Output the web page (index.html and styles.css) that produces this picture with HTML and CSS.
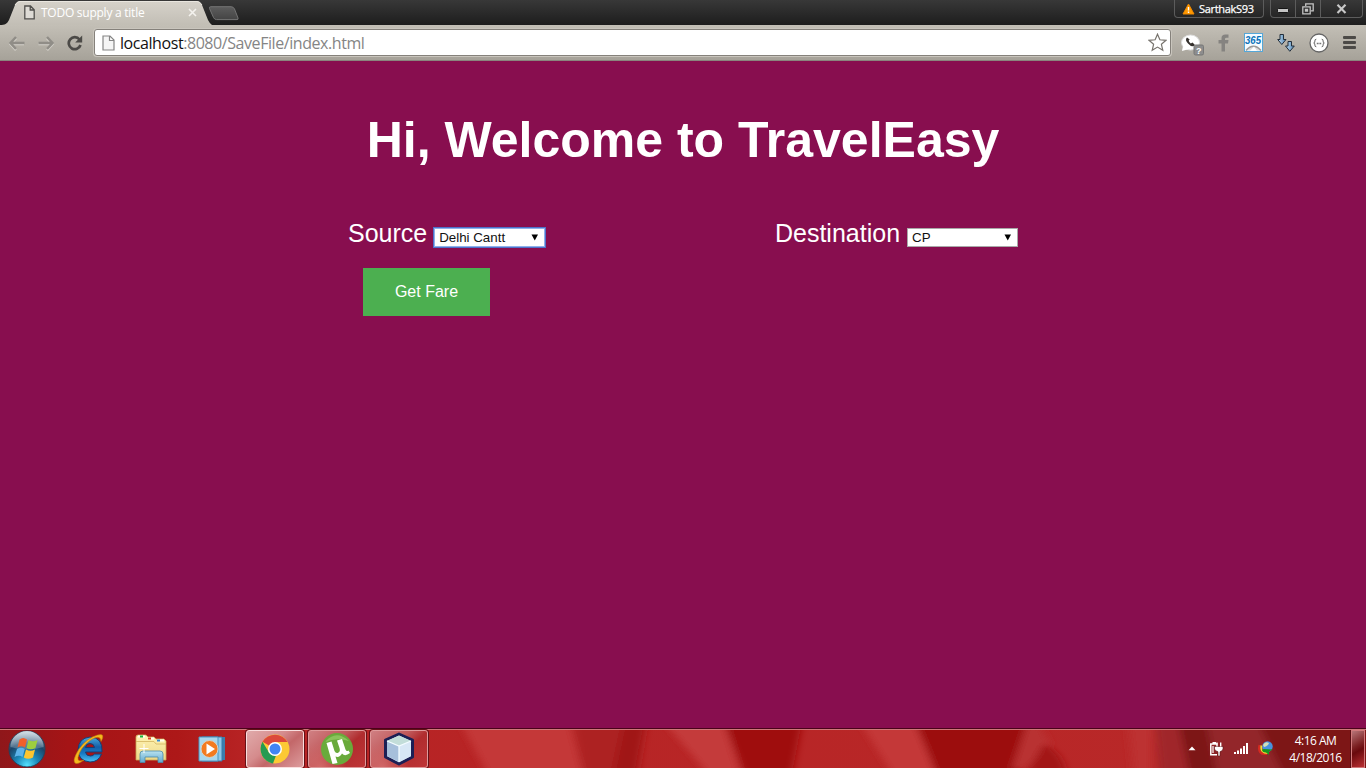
FILE: index.html
```html
<!DOCTYPE html>
<html lang="en">
<head>
<meta charset="utf-8">
<title>TODO supply a title</title>
<link rel="stylesheet" href="styles.css">
</head>
<body>
<div class="screen">
  <header class="tabstrip">
    <div class="tab">
      <svg class="tab-shape" width="212" height="25" viewBox="0 0 212 25">
        <defs><linearGradient id="tabfill" x1="0" y1="0" x2="0" y2="1"><stop offset="0" stop-color="#d6d2ca"/><stop offset="1" stop-color="#c2beb5"/></linearGradient></defs>
        <path d="M0 25C5 25 7 24 9 20L15 5Q17 1 20 1H197Q200 1 202 5L208 20Q210 24 212 25Z" fill="url(#tabfill)"/>
        <path d="M15 5Q17 1.500 20 1.500H197Q200 1.500 202 5" fill="none" stroke="#e9e6df"/>
      </svg>
      <svg class="tab-page" width="11" height="15" viewBox="0 0 11 15"><path d="M.8 1H6.500L10.200 4.700V13.800H.8ZM6.200 1V5H10" fill="#dedbd5" stroke="#504f4c" stroke-width="1.300"/></svg>
      <span class="tab-title">TODO supply a title</span>
      <svg class="tab-close" width="9" height="9" viewBox="0 0 9 9"><path d="M1 1L8 8M8 1L1 8" stroke="#f4f2ee" stroke-width="1.600"/></svg>
    </div>
    <svg class="newtab" width="32" height="15" viewBox="0 0 32 15"><defs><linearGradient id="nt" x2="0" y2="1"><stop stop-color="#5d5d5d"/><stop offset="1" stop-color="#444"/></linearGradient></defs><path d="M2.500.7H23Q25.500.7 26.500 3L30 12Q30.500 13.600 29 13.600H8.500Q6.500 13.600 5.500 11.500L1.500 2.500Q1 .7 2.500.7Z" fill="url(#nt)" stroke="#747474"/></svg>
    <div class="profile">
      <svg width="13" height="12" viewBox="0 0 13 12"><path d="M6.500 1L12 11H1Z" fill="#f90" stroke="#f08a00" stroke-linejoin="round"/><path d="M6.500 4V7.500M6.500 8.500V10" stroke="#fff" stroke-width="1.400"/></svg>
      <span>SarthakS93</span>
    </div>
    <div class="winbtns">
      <div class="wb wb-min"><svg width="12" height="5" viewBox="0 0 12 5"><rect x=".5" y=".5" width="11" height="4" rx="1" fill="#c4c4c4" stroke="#151515"/></svg></div>
      <div class="wb wb-max"><svg width="12" height="12" viewBox="0 0 12 12"><path d="M3.700 3V.8H11.200V7.800H9M.8 3.800H8.200V10.800H.8ZM3.500 6.500H5.500V8H3.500Z" fill="none" stroke="#c4c4c4" stroke-width="1.300"/></svg></div>
      <div class="wb wb-close"><svg width="11" height="10" viewBox="0 0 11 10"><path d="M1.500.7L9.500 9M9.500.7L1.500 9" stroke="#c8c8c8" stroke-width="2.100"/></svg></div>
    </div>
  </header>

  <nav class="toolbar">
    <svg class="nav-icon" width="18" height="16" viewBox="0 0 18 16"><path d="M8 2L2.500 8L8 14M3 8H16" fill="none" stroke="#d5d2cb" stroke-width="2.600" transform="translate(0 1)"/><path d="M8 2L2.500 8L8 14M3 8H16.500" fill="none" stroke="#908d87" stroke-width="2.500"/></svg>
    <svg class="nav-icon" width="18" height="16" viewBox="0 0 18 16"><path d="M10 2L15.500 8L10 14M15 8H1.500" fill="none" stroke="#d5d2cb" stroke-width="2.600" transform="translate(0 1)"/><path d="M10 2L15.500 8L10 14M15 8H1.500" fill="none" stroke="#908d87" stroke-width="2.500"/></svg>
    <svg class="nav-icon" width="18" height="16" viewBox="0 0 18 16"><path d="M14.500 10A6 6 0 1 1 13.500 4.500" fill="none" stroke="#4c4a47" stroke-width="2.700"/><path d="M16.200 .5V7.500H9.200Z" fill="#4c4a47"/></svg>
    <div class="omnibox">
      <svg class="page-icon" width="13" height="16" viewBox="0 0 13 16"><path d="M1 1H8L12 5V15H1ZM7.500 1V5.500H12" fill="#f5f5f5" stroke="#858585" stroke-width="1.200"/></svg>
      <span class="url"><b>localhost</b>:8080/SaveFile/index.html</span>
      <svg class="star" width="19" height="19" viewBox="0 0 19 19"><path d="M9.500 1.200L11.900 6.800L18 7.300L13.400 11.300L14.800 17.300L9.500 14.100L4.200 17.300L5.600 11.300L1 7.300L7.100 6.800Z" fill="#fff" stroke="#77736d" stroke-width="1.200"/></svg>
    </div>
    <div class="extensions">
      <svg width="24" height="24" viewBox="0 0 24 24"><ellipse cx="9.500" cy="9.500" rx="9" ry="7.500" fill="#fff" stroke="#ddd"/><path d="M2 13L1 18L8 16Z" fill="#fff"/><path d="M6 4.500Q3.500 7 7 10.500Q11 15 14 12L11.500 9.500L9.800 10.500Q7.800 9 7.700 7.500L8.700 6.500Z" fill="#34302d"/><rect x="13" y="12" width="9.500" height="10" rx="1.500" fill="#8d8d8d" stroke="#777"/><text x="15" y="20.500" class="badge-q">?</text></svg>
      <svg width="12" height="18" viewBox="0 0 12 18"><path d="M3.500 17.500V9.500H.5V6H3.500V4Q3.500.5 7.500.5H10.500V3.800H8.500Q7 3.800 7 5V6H10.500L10 9.500H7V17.500Z" fill="#858380"/></svg>
      <svg width="19" height="19" viewBox="0 0 19 19"><rect x=".5" y=".5" width="18" height="18" fill="#f5fbff" stroke="#55a7d8"/><text x="1" y="11" class="ext365" textLength="16" lengthAdjust="spacingAndGlyphs">365</text><path d="M2 17.500Q9.500 9 17 17.500" fill="#ddd" stroke="#999" stroke-width="1.400"/><path d="M6 18L10 13.500L13 18Z" fill="#fff"/></svg>
      <svg width="18" height="18" viewBox="0 0 18 18"><defs><linearGradient id="arr"><stop stop-color="#bfdcf2"/><stop offset="1" stop-color="#5486b4"/></linearGradient></defs><g fill="url(#arr)" stroke="#222e3b"><path d="M3 .5H6.500V5.500H9L4.800 10.500L.7 5.500H3Z"/><path d="M11 7.500H14.500V12H17.300L12.800 17.300L8.500 12H11Z"/></g></svg>
      <svg width="20" height="20" viewBox="0 0 20 20"><circle cx="10" cy="10" r="9" fill="#fff" stroke="#666" stroke-width="1.300"/><path d="M7.300 6.200Q5.700 6.200 5.900 8Q6 10 4.700 10Q6 10 5.900 12Q5.700 13.800 7.300 13.800M12.700 6.200Q14.300 6.200 14.100 8Q14 10 15.300 10Q14 10 14.100 12Q14.300 13.800 12.700 13.800" fill="none" stroke="#666" stroke-width="1"/><path d="M7.800 10.500H12.200" stroke="#555" stroke-width="1.300" stroke-dasharray="1 .7"/></svg>
      <svg width="13" height="14" viewBox="0 0 13 14"><g fill="#4c4a47"><rect width="13" height="3" rx="1"/><rect y="5" width="13" height="3" rx="1"/><rect y="10" width="13" height="3" rx="1"/></g></svg>
    </div>
  </nav>

  <main class="page">
    <h1>Hi, Welcome to TravelEasy</h1>
    <div class="fields">
      <div class="field">Source <span class="select focused">Delhi Cantt<svg width="8" height="7" viewBox="0 0 8 7"><path d="M.5.500H7L3.750 6.500Z"/></svg></span></div>
      <div class="field">Destination <span class="select">CP<svg width="8" height="7" viewBox="0 0 8 7"><path d="M.5.500H7L3.750 6.500Z"/></svg></span></div>
    </div>
    <button class="fare">Get Fare</button>
  </main>

  <footer class="taskbar">
    <svg class="glass" width="1366" height="38" viewBox="0 0 1366 38">
      <defs>
        <linearGradient id="base"><stop stop-color="#8f171a"/><stop offset=".05" stop-color="#a51416"/><stop offset=".13" stop-color="#ad1818"/><stop offset=".18" stop-color="#b72324"/><stop offset="1" stop-color="#b92929"/></linearGradient>
        <filter id="soft" x="-5%" y="-50%" width="110%" height="200%"><feGaussianBlur stdDeviation="4 2"/></filter>
      </defs>
      <rect width="1366" height="38" fill="url(#base)"/>
      <g filter="url(#soft)">
        <path d="M460-8L570-8L584 48H490Z" fill="#c43838"/>
        <path d="M573-8H646L636 48H584Z" fill="#ad2121"/>
        <path d="M624-8H645L636 48H612Z" fill="#a01212"/>
        <path d="M664-8H724L742 48H712Z" fill="#c43a3a"/>
        <path d="M724-8H802L791 48H746Z" fill="#9f0c0c"/>
        <path d="M860-8H915L938 48H895Z" fill="#c43838"/>
        <path d="M915-8H1035L1015 48H938Z" fill="#9c0d0d"/>
        <path d="M1026-4H1040L1050 14L1026 38H1012Z" fill="#b93031"/>
        <path d="M1044 14Q1065 24 1066 48H1024Z" fill="#a31213"/>
        <path d="M1128-8H1152V48H1134Z" fill="#bd3131"/>
        <path d="M1178-8H1376V48H1190Z" fill="#7d1215"/>
        <path d="M1155-8H1178L1190 48H1160Z" fill="#a0272a"/>
        <path d="M1206-8H1258L1285 48H1218Z" fill="#932629"/>
      </g>
    </svg>
    <svg class="start" width="40" height="38" viewBox="0 0 40 38">
      <defs>
        <radialGradient id="orb" cx=".5" cy=".95" r=".9"><stop stop-color="#55e2ff"/><stop offset=".35" stop-color="#1b87b8"/><stop offset=".7" stop-color="#1c4468"/><stop offset="1" stop-color="#7891a5"/></radialGradient>
        <linearGradient id="gloss" x2="0" y2="1"><stop stop-color="#e4eef3" stop-opacity=".85"/><stop offset="1" stop-color="#b3c5d1" stop-opacity=".25"/></linearGradient>
      </defs>
      <circle cx="20" cy="19" r="18" fill="url(#orb)" stroke="#27415a"/>
      <path d="M3.500 17A16.500 16 0 0 1 36.500 17Q20 22 3.500 17Z" fill="url(#gloss)"/>
      <path d="M12.500 9.500Q16 6.500 20 9.500L18 17.500Q14 15 10.500 17.500Z" fill="#f2602b"/>
      <path d="M21.500 10Q26 12.500 30.500 10L28.500 18Q23.500 20.500 19.500 18Z" fill="#9dce3f"/>
      <path d="M10 19Q14 16.500 17.800 19L15.500 27Q12 24.500 7.500 27Z" fill="#5db3ea"/>
      <path d="M19 19.500Q23.500 22 28 19.500L26 27.500Q21 30 16.800 27.500Z" fill="#fdc52f"/>
    </svg>
    <svg class="ie" width="34" height="34" viewBox="0 0 34 34">
      <defs><linearGradient id="ieb" x2="0" y2="1"><stop stop-color="#49a9df"/><stop offset=".4" stop-color="#145fa8"/><stop offset=".65" stop-color="#1678c4"/><stop offset="1" stop-color="#4cc4f4"/></linearGradient></defs>
      <path d="M30 20H13.500Q14 24 18.500 24Q21 24 22.500 22H29.500Q26.500 30 18 30Q6.500 29 6 18Q6.500 6 18 5Q31 5.500 30 20ZM13.500 15.500H22.500Q22 11.500 18 11.500Q14 11.500 13.500 15.500Z" fill="url(#ieb)" stroke="#153e72"/>
      <path d="M29 9.500Q34 .5 25.500 3Q15 6 7 17Q-1 30 4 31.500Q6.500 32 12 28Q5.500 30.500 6 25.500Q8 16 18 8.500Q28.500 1.500 29 9.500Z" fill="#f5b81e" stroke="#c47d08" stroke-width=".6"/>
    </svg>
    <svg class="folder" width="34" height="32" viewBox="0 0 34 32">
      <defs><linearGradient id="fold" x2="0" y2="1"><stop stop-color="#fff3b4"/><stop offset="1" stop-color="#edd888"/></linearGradient><linearGradient id="rack" x2="0" y2="1"><stop stop-color="#b9e2ef"/><stop offset="1" stop-color="#5fa8d0"/></linearGradient></defs>
      <path d="M2 27V4Q2 2 4 2H12L14 4H20L22 6H30L32 8V27Z" fill="url(#fold)" stroke="#c9a857" stroke-width=".8"/>
      <path d="M4 3.500H11M14 5.500H20M23 7.500H30" stroke="#fffef0" stroke-width="2"/><rect x="6" y="2.500" width="3" height="2" fill="#16b63a"/><rect x="14" y="4.500" width="3" height="2" fill="#df4126"/><rect x="23" y="6.500" width="3" height="2" fill="#3189d4"/>
      <path d="M2 8.500H20L22 11H32" stroke="#d3b55f" stroke-width=".8" fill="none"/>
      <path d="M6 29.500V21Q6 18 9 18H26Q29 18 29 21V29.500H24V24H11V29.500Z" fill="url(#rack)" stroke="#4b8ba8" stroke-width=".8"/>
      <path d="M10 11V20M5.500 15.500H14.500" stroke="#fff"/>
    </svg>
    <svg class="media" width="28" height="28" viewBox="0 0 28 28">
      <path d="M7 2H27V25H7Z" fill="#3b7ead"/><path d="M4 2H24V26H4Z" fill="#8fc8e8" stroke="#367aaa"/><path d="M1 2H20V26H1Z" fill="#a9d7ed" stroke="#4995c1"/>
      <circle cx="11.500" cy="14" r="8.500" fill="#f37b20" stroke="#d3d2c8"/><path d="M8.500 8.500L17 14L8.500 19.500Z" fill="#fff"/>
    </svg>
    <div class="app active">
      <svg width="30" height="30" viewBox="0 0 30 30"><circle cx="15" cy="15" r="14.500" fill="#fcc934"/><path d="M15 15L2.500 7.800A14.500 14.500 0 0 1 27.600 8H15Z" fill="#dc493b"/><path d="M2.500 7.800L9 18.500Q12 22 16 21.500L13 29.400A14.500 14.500 0 0 1 2.500 7.800Z" fill="#259b52"/><circle cx="15" cy="15" r="7" fill="#fff"/><circle cx="15" cy="15" r="5.500" fill="#4285f4"/></svg>
    </div>
    <div class="app">
      <svg width="34" height="34" viewBox="0 0 34 34"><circle cx="17" cy="17" r="16" fill="#69aa3b"/><path d="M5 10Q16-3 29 9Q17 5 5 10Z" fill="#8ac35b"/><path d="M6.500 11L11.500 9.500L14.500 19Q16 22 18.500 20.500Q20.500 19.500 19.500 16L17 8.500L22 7L25.500 17.500Q26.500 20 28.500 18.500L30 21Q25 25 22 21.500Q19.500 26 15.500 24.500L17.500 31L12.500 32Z" fill="#fff"/></svg>
    </div>
    <div class="app">
      <svg width="32" height="34" viewBox="0 0 32 34"><path d="M16 2L29.500 8V25L16 32L2.500 25V8Z" fill="#d9eaf4" stroke="#1c1f55" stroke-width="3" stroke-linejoin="round"/><path d="M4 9L16 14V30L4 24Z" fill="#a6bfdb"/><path d="M28 9L16 14V30L28 24Z" fill="#d7e7f5"/><path d="M4 9L16 3.500L28 9L16 14Z" fill="#c2ddd9"/><path d="M4 9L16 14L28 9M16 14V30" fill="none" stroke="#f2fbff" stroke-width="1.300"/></svg>
    </div>
    <div class="tray">
      <svg width="8" height="5" viewBox="0 0 8 5"><path d="M4 .5L7.500 4.300H.5Z" fill="#fff"/></svg>
      <svg class="power" width="15" height="16" viewBox="0 0 15 16"><path d="M8 13.800H1.800V3H8.500M3.500 1.700H7" fill="none" stroke="#fff" stroke-width="1.500"/><path d="M4 5V12" stroke="#fff" stroke-width="1.200"/><path d="M5.500 5.500H14V8Q13.500 10.300 11 10.700V15H9V10.700Q6 10 5.500 8Z" fill="#fff" stroke="#5a1113" stroke-width=".6"/><path d="M8 1.500V5.500M11.700 1.500V5.500" stroke="#fff" stroke-width="1.400"/></svg>
      <svg class="signal" width="15" height="12" viewBox="0 0 15 12"><path d="M0 9H2V11H0ZM3 7.500H5V11H3ZM6 5.500H8V11H6ZM9 3H11V11H9ZM12 0H14V11H12Z" fill="#fff"/></svg>
      <svg class="globe" width="16" height="15" viewBox="0 0 16 15"><path d="M1.500 4Q-1 14 9 13" fill="none" stroke="#d62a20" stroke-width="2"/><path d="M3.500 4.500Q2 12 10 12" fill="none" stroke="#f5dc31" stroke-width="2"/><circle cx="9.500" cy="5.500" r="5.200" fill="#4792df"/><path d="M5 4Q7 0 11 2Q10 5 6 6Z" fill="#d1dfb8"/><path d="M6 8L15 8.500L11 10.500V14L8 11.500Q4 11.500 4 8.500Z" fill="#159521"/></svg>
      <div class="clock"><span>4:16 AM</span><span>4/18/2016</span></div>
      <div class="peek"></div>
    </div>
  </footer>
</div>
</body>
</html>
```
FILE: styles.css
```css
* { box-sizing: border-box; }
body { margin: 0; overflow: hidden; font-family: "Liberation Sans", Arial, sans-serif; }
svg { display: block; flex: none; }
.screen { width: 1366px; height: 768px; display: flex; flex-direction: column; background: #880e4f; }

.tabstrip { flex: none; height: 25px; display: flex; align-items: flex-start; background: linear-gradient(#383838, #1d1d1d); font-family: "Open Sans", "Noto Sans", sans-serif; }
.tab { position: relative; width: 206px; height: 25px; display: flex; align-items: center; padding-left: 24px; }
.tab-shape { position: absolute; left: 0; top: 0; }
.tab-page, .tab-title, .tab-close { position: relative; }
.tab-title { width: 147px; margin-left: 6px; color: #fff; font-size: 12px; letter-spacing: -.25px; line-height: 25px; white-space: nowrap; }
.newtab { margin: 6px 0 0 2px; }
.profile { width: 90px; height: 18px; margin-left: auto; display: flex; align-items: center; gap: 4px; padding-left: 7px; border: 1px solid #5c5c5c; border-top: 0; border-radius: 0 0 4px 4px; color: #fff; font-size: 11px; letter-spacing: -.3px; -webkit-text-stroke: .25px #fff; }
.winbtns { display: flex; width: 93px; height: 18px; margin: 0 3px 0 6px; border: 1px solid #5c5c5c; border-top: 0; border-radius: 0 0 4px 4px; }
.profile { position: relative; }
.wb { display: flex; align-items: center; justify-content: center; }
.wb-min { width: 25px; padding-top: 4px; border-right: 1px solid #5c5c5c; }
.wb-max { width: 25px; border-right: 1px solid #5c5c5c; }
.wb-close { width: 40px; }

.toolbar { flex: none; height: 36px; display: flex; align-items: center; padding: 0 10px 0 8px; background: linear-gradient(#c3bfb6, #a6a299); border-bottom: 1px solid #8a867e; }
.nav-icon { margin-right: 11px; }
.omnibox { width: 1077px; height: 27px; display: flex; align-items: center; padding: 0 3px 0 7px; margin-left: -1px; background: #fff; border: 1px solid #85817b; border-radius: 3px; box-shadow: 0 0 0 1px #c9c5bd; }
.url { flex: 1; margin-left: 5px; color: #858585; font: 16px/24px "Open Sans", "Noto Sans", sans-serif; letter-spacing: -.43px; }
.url b { font-weight: 400; color: #111; }
.extensions { flex: 1; display: flex; align-items: center; justify-content: space-between; padding-left: 10px; }
.extensions svg:first-child { margin: 4px -1px 0 0; }
.badge-q { font: bold 9px "Liberation Sans", sans-serif; fill: #fff; }
.ext365 { font: italic bold 11px "Liberation Sans", sans-serif; fill: #0872ba; }

.page { flex: 1; color: #fff; }
h1 { margin: 51px 0 0; text-align: center; font-size: 50px; line-height: 57px; }
.fields { display: flex; justify-content: space-between; width: 670px; margin: 50px 0 0 348px; }
.field { font-size: 25px; line-height: 28px; white-space: pre; }
.select { display: inline-flex; align-items: center; justify-content: space-between; width: 111px; height: 19px; padding: 0 5px 0 4px; background: #fff; border: 1px solid #a9a9a9; color: #111; font-size: 13.333px; line-height: 17px; }
.focused { border-color: #8fb0ea; outline: 1px solid #4d72cb; outline-offset: -.5px; }
.fare { display: block; width: 127px; height: 48px; margin: 21px 0 0 363px; padding: 0; border: 0; background: #4caf50; color: #fff; font: 16px "Liberation Sans", Arial, sans-serif; }

.taskbar { position: relative; z-index: 0; flex: none; height: 40px; display: flex; align-items: center; border-top: 1px solid #4a0319; box-shadow: inset 0 1px #cf7779; background: #b92929; }
.glass { position: absolute; left: 0; top: 1px; z-index: -1; }
.start { margin-left: 7px; }
.ie { margin-left: 25px; }
.folder { margin-left: 28px; }
.media { margin-left: 30px; }
.app { width: 58px; height: 38px; margin: 0 4px 0 0; display: flex; align-items: center; justify-content: center; border: 1px solid #df9b9c; border-radius: 3px; box-shadow: 0 0 0 1px #651016; background: radial-gradient(circle at 20% 105%, #d36c6c, transparent 45%), linear-gradient(140deg, #d08083 0, #c0585a 40%, #b02c2e 58%, #bf3537 100%); }
.app.active { margin-left: 20px; border-color: #f9dede; background: linear-gradient(140deg, #e0aaaa, #d58b8c 40%, #c36769 58%, #dd9c9d); }
.tray { margin-left: auto; display: flex; align-items: center; height: 39px; }
.power { margin-left: 13px; }
.signal { margin-left: 10px; }
.globe { margin-left: 9px; }
.clock { width: 78px; padding-left: 5px; display: flex; flex-direction: column; align-items: center; color: #fff; font: 12px/17px "Open Sans", "Noto Sans", sans-serif; letter-spacing: -.5px; }
.peek { width: 14px; height: 38px; margin: 1px 1px 0 -1px; border: 1px solid #d1797b; box-shadow: -1px 0 #570c11; background: linear-gradient(150deg, #b77578, #7d2224 40%, #69090d 55%, #b93033); }
```
